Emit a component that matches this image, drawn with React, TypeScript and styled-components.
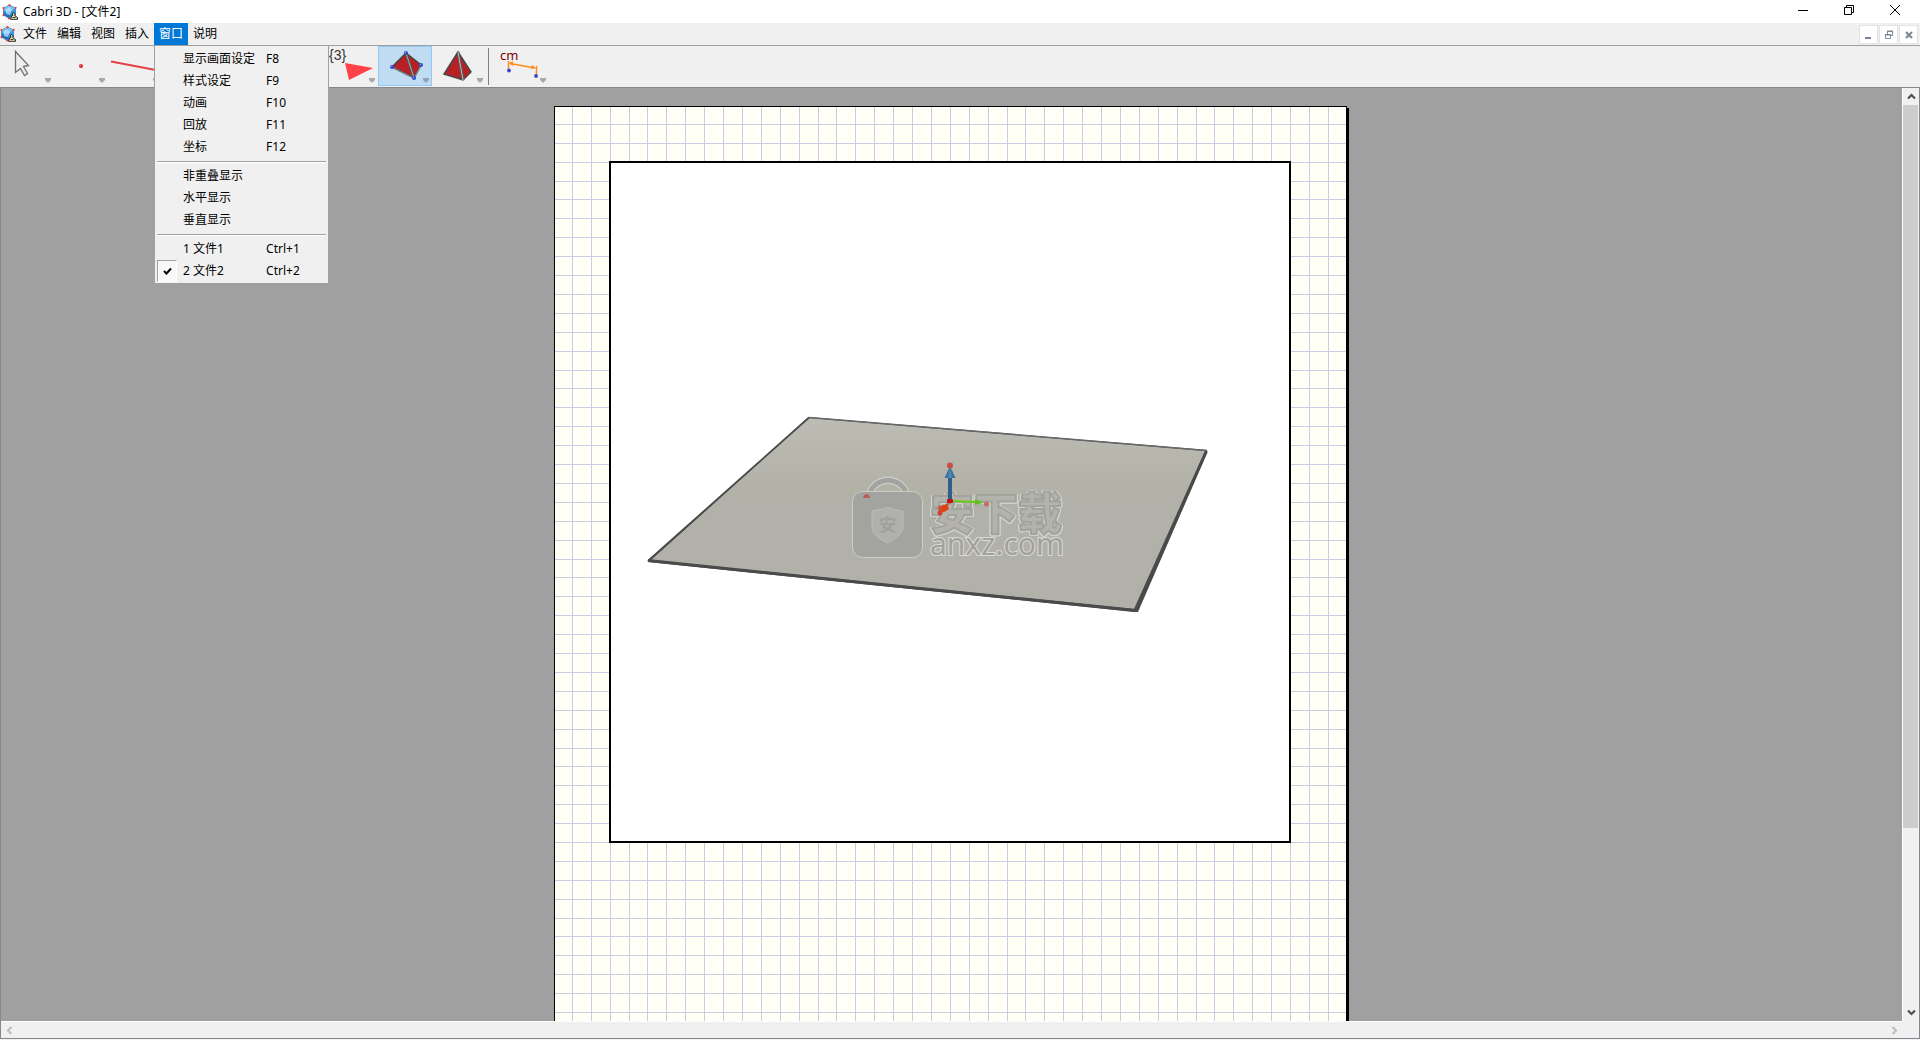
import React from "react";
import styled, { createGlobalStyle } from "styled-components";

const GlobalStyle = createGlobalStyle`
  body {
    margin: 0;
    background: #f0f0f0;
    overflow: hidden;
  }
  *, *::before, *::after { box-sizing: border-box; }
  body, button {
    font-family: "Noto Sans", "Noto Sans CJK SC", sans-serif;
    font-size: 12px;
    line-height: 16px;
    color: #000;
  }
  svg { display: block; flex: none; }
`;

const Window = styled.main`
  display: flex;
  flex-direction: column;
  height: 100vh;
  padding-bottom: 1px;
  background: #f0f0f0;
`;

const PlainButton = styled.button`
  display: flex;
  align-items: center;
  justify-content: center;
  margin: 0;
  padding: 0;
  border: 0;
  background: none;
`;

const TitleBar = styled.header`
  display: flex;
  height: 23px;
  padding-right: 2px;
  background: #fff;
`;

const Title = styled.h1`
  display: flex;
  align-items: center;
  flex: 1;
  gap: 5px;
  margin: 0;
  padding-left: 2px;
  font-size: 12px;
  font-weight: 400;
`;

const CaptionButton = styled(PlainButton)`
  width: 46px;
  height: 20px;
`;

const MenuBar = styled.nav`
  display: flex;
  height: 22px;
`;

const DocumentIcon = styled.div`
  display: flex;
  align-items: center;
  width: 18px;
`;

const MenuGroup = styled.div`
  flex: 1;
  display: flex;
`;

const MenuItem = styled.div`
  position: relative;
`;

const MenuTitle = styled(PlainButton)<{ $open?: boolean }>`
  height: 22px;
  padding: 0 5px;
  color: ${(p) => (p.$open ? "#fff" : "#000")};
  background: ${(p) => (p.$open ? "#0078d7" : "transparent")};
`;

const DropDown = styled.div`
  position: absolute;
  z-index: 2;
  top: 22px;
  left: 0;
  width: 175px;
  padding: 2px 2px 1px;
  border: 1px solid #a0a0a0;
  background: #f0f0f0;
`;

const MenuRow = styled(PlainButton)`
  display: grid;
  grid-template-columns: 19px 83px 1fr;
  width: 100%;
  height: 22px;
  text-align: left;
  white-space: nowrap;
`;

const CheckBoxMark = styled.span`
  display: flex;
  align-items: center;
  justify-content: center;
  width: 20px;
  height: 22px;
  border: 1px solid;
  border-color: #a0a0a0 #fff #fff #a0a0a0;
  background: #f8f8f8;
`;

const RowLabel = styled.span`
  grid-column: 2;
  padding-left: 7px;
`;

const RowKey = styled.span`
  grid-column: 3;
  padding-left: 7px;
`;

const MenuRule = styled.hr`
  height: 2px;
  margin: 3px 0 2px;
  border: 0;
  border-top: 1px solid #a0a0a0;
  background: #fff;
`;

const DocumentButtons = styled.div`
  display: flex;
  align-items: center;
  gap: 1px;
  padding: 2px 2px 1px 0;
`;

const DocumentButton = styled(PlainButton)`
  width: 19px;
  height: 19px;
  border: 1px solid #e3e3e3;
  background: #fff;
`;

const ToolBar = styled.div`
  display: flex;
  height: 42px;
  border-top: 1px solid #a0a0a0;
`;

const ToolButton = styled(PlainButton)<{ $active?: boolean }>`
  width: 54px;
  height: 40px;
  border: 1px solid ${(p) => (p.$active ? "#90c8f6" : "transparent")};
  background: ${(p) => (p.$active ? "#c0dcf3" : "transparent")};
`;

const ToolSeparator = styled.div`
  width: 1px;
  height: 37px;
  margin: 2px 6px 0 2px;
  background: #808080;
`;

const Workspace = styled.section`
  display: grid;
  grid-template: minmax(0, 1fr) 17px / minmax(0, 1fr) 17px;
  flex: 1;
  min-height: 0;
  border: 1px solid #828790;
`;

const Canvas = styled.div`
  display: flex;
  align-items: flex-start;
  justify-content: center;
  min-height: 0;
  padding-top: 18px;
  overflow: hidden;
  background: #a0a0a0;
`;

const Sheet = styled.article`
  position: relative;
  flex: none;
  width: 793px;
  height: 1123px;
  margin-right: 2px;
  padding: 54px;
  border: 1px solid #000;
  background: #fffff5;
  box-shadow: 2px 2px 0 #000;
`;

const GridLines = styled.svg`
  position: absolute;
  inset: 0;
`;

const View = styled.div`
  position: relative;
  width: 682px;
  height: 682px;
  border: 2px solid #000;
  background: #fff;
`;

const EmbossedText = styled.text`
  font-family: "Noto Sans CJK SC", sans-serif;
  font-size: 44px;
  font-weight: 900;
  fill: #b3b3ab;
  stroke: #a3a39e;
  stroke-width: 2px;
  stroke-linejoin: round;
  filter: drop-shadow(1px 0 0 #d8d8d3) drop-shadow(-1px 0 0 #d8d8d3) drop-shadow(0 1px 0 #d0d0ca);
`;

const VerticalScroll = styled.div`
  display: flex;
  flex-direction: column;
  border-left: 1px solid #fff;
`;

const HorizontalScroll = styled.div`
  display: flex;
  justify-content: space-between;
  border-top: 1px solid #fff;
`;

const ScrollButton = styled(PlainButton)`
  width: 16px;
  height: 17px;
`;

const ScrollThumb = styled.div`
  flex: 37;
  margin-right: 1px;
  background: #cdcdcd;
`;

const ScrollSpace = styled.div`
  flex: 9;
`;

function AppIcon() {
  return (
    <svg width="16" height="16" viewBox="0 0 16 16" aria-hidden="true">
      <path d="M7.5 1 13.5 4v7L7.5 14.5 1.5 11V4Z" fill="#2b8be0" stroke="#4b6f95" strokeWidth=".8" />
      <path d="M7.5 1 13.5 4 10 7 3 8 1.5 4Z" fill="#79c0f3" />
      <path d="M3 8 10 7 8 14.3 1.5 11Z" fill="#1872c8" />
      <path d="M4 5.5 7 3l3 3-2 5-4-1Z" fill="#bfe6ff" opacity=".75" />
      <path d="M10 7 13.5 4v7L8 14.3Z" fill="#3699e8" />
      <g fill="#e1433c">
        <circle cx="7.5" cy="1.2" r="1.1" />
        <circle cx="1.4" cy="4" r="1.1" />
        <circle cx="13.6" cy="3.8" r="1.1" />
        <circle cx="1.5" cy="11.2" r="1.1" />
        <circle cx="7" cy="14.5" r="1.1" />
      </g>
      <path d="M8.5 15.3 9.5 12l1.5-.5L10.3 9.5 12 8.5l1.2 1.5-.4 1.8 2.7 1.700v1.800Z" fill="#eee6b9" stroke="#111" strokeWidth=".9" />
      <path d="M10.5 13.5h3" stroke="#111" strokeWidth=".8" />
    </svg>
  );
}

const TOOL_ART: Record<string, React.ReactNode> = {
  pointer: (
    <path d="M15.5 5.5v21l5-4 4 7 3-2-4-7 5-1Z" fill="#eee" stroke="#707070" strokeWidth="1.3" />
  ),
  point: (
    <>
      <circle cx="27" cy="20" r="2" fill="#d22a2a" />
      <circle cx="26.5" cy="19.5" r=".7" fill="#f57d7d" />
    </>
  ),
  line: <path d="M3 15.5 53 25" stroke="#e24147" strokeWidth="2" />,
  plane: (
    <>
      <text x="5" y="14" fontSize="14" fill="#333" fontFamily="Liberation Sans, sans-serif">
        {"{3}"}
      </text>
      <path d="M21 17 49 22 25 34Z" fill="#ff4248" />
    </>
  ),
  tetrahedron: (
    <>
      <path d="M28 7 43 19 36 32 14 21Z" fill="#b92025" stroke="#454545" strokeWidth="1.5" />
      <path d="M28 7 36 32" stroke="#555" strokeWidth="3" />
      <path d="M28 7 36 32" stroke="#aaa" />
      <path d="M14 21 36 32 43 19" fill="none" stroke="#8a8a8a" strokeWidth="1" />
      {[
        [28, 7],
        [43, 19],
        [14, 21],
        [36, 32],
      ].map(([x, y]) => (
        <g key={x}>
          <circle cx={x} cy={y} r="2" fill="#3148cf" />
          <circle cx={x - 0.5} cy={y - 0.5} r=".7" fill="#8495f6" />
        </g>
      ))}
    </>
  ),
  pyramid: (
    <>
      <path d="M26 6 39 26 31 34 12 28Z" fill="#b92025" stroke="#484848" strokeWidth="1.5" />
      <path d="M26 6 31 34" stroke="#555" strokeWidth="3" />
      <path d="M26 6 31 34" stroke="#bbb" />
    </>
  ),
  distance: (
    <>
      <text x="5" y="14" fontSize="13" fill="#800000" fontFamily="Noto Sans, sans-serif">
        cm
      </text>
      <path d="M13.5 15v9M41.5 20v10" stroke="#ff8c1a" strokeWidth="1.5" />
      <path d="M15 17.5 40 22" stroke="#ff8c1a" strokeWidth="1.500" />
      <path d="M14 17l4-2v5ZM41 22l-4-3-1 4Z" fill="#ff8c1a" />
      <circle cx="14" cy="24.5" r="1.900" fill="#3148cf" />
      <circle cx="41" cy="30" r="1.900" fill="#3148cf" />
    </>
  ),
};

function Tool({ art, active }: { art?: string; active?: boolean }) {
  return (
    <ToolButton type="button" $active={active}>
      <svg width="54" height="40" viewBox="0 0 54 40" overflow="visible" aria-hidden="true">
        {art && TOOL_ART[art]}
        <path d="M45 32h6v2l-3 3-3-3Z" fill={active ? "#8fa3b4" : "#a9a9a9"} />
      </svg>
    </ToolButton>
  );
}

type Row = { label: string; hotkey?: string; checked?: boolean };

const WINDOW_MENU: Row[][] = [
  [
    { label: "显示画面设定", hotkey: "F8" },
    { label: "样式设定", hotkey: "F9" },
    { label: "动画", hotkey: "F10" },
    { label: "回放", hotkey: "F11" },
    { label: "坐标", hotkey: "F12" },
  ],
  [{ label: "非重叠显示" }, { label: "水平显示" }, { label: "垂直显示" }],
  [
    { label: "1 文件1", hotkey: "Ctrl+1" },
    { label: "2 文件2", hotkey: "Ctrl+2", checked: true },
  ],
];

const MENUS = ["文件", "编辑", "视图", "插入", "窗口", "说明"];

function WindowMenu() {
  return (
    <DropDown>
      {WINDOW_MENU.map((rows, i) => (
        <React.Fragment key={i}>
          {i > 0 && <MenuRule />}
          {rows.map((row) => (
            <MenuRow type="button" key={row.label}>
              {row.checked && (
                <CheckBoxMark>
                  <svg width="9" height="9" viewBox="0 0 9 9" aria-hidden="true">
                    <path d="M1 4 3.5 6.5 8 1.5" fill="none" stroke="#000" strokeWidth="2" />
                  </svg>
                </CheckBoxMark>
              )}
              <RowLabel>{row.label}</RowLabel>
              {row.hotkey && <RowKey>{row.hotkey}</RowKey>}
            </MenuRow>
          ))}
        </React.Fragment>
      ))}
    </DropDown>
  );
}

// Half-centimetre paper grid at 96 dpi, each line snapped to a whole pixel.
const GRID_STEP = 48 / 2.54;
const snap = (n: number) => Math.round(n * GRID_STEP - 2);

function PaperGrid() {
  const vertical = Array.from({ length: 41 }, (_, i) => snap(i + 1));
  const horizontal = Array.from({ length: 59 }, (_, i) => snap(i + 1));
  return (
    <GridLines width="100%" height="100%" aria-hidden="true" fill="#cbcbe3">
      {horizontal.map((y) => (
        <rect key={`h${y}`} x="0" y={y} width="100%" height="1" />
      ))}
      {vertical.map((x) => (
        <rect key={`v${x}`} x={x} y="0" width="1" height="100%" />
      ))}
    </GridLines>
  );
}

function Scene() {
  return (
    <svg width="678" height="678" viewBox="611 163 678 678">
      <defs>
        <linearGradient id="base" x1="0" y1="0" x2="0" y2="1">
          <stop offset="0" stopColor="#bcbcb4" />
          <stop offset=".4" stopColor="#b1b1a6" />
          <stop offset=".43" stopColor="#b1b1a9" />
          <stop offset="1" stopColor="#b1b1a9" />
        </linearGradient>
      </defs>
      <path d="M809 417 1207 450V453L1138 612H1134L648 562V560Z" fill="#4b4b4b" />
      <path d="M809 418 1205 451 1134 609 651 560Z" fill="url(#base)" />
      <path d="M809 417.5 1207 450.5" stroke="#67676a" strokeWidth="1.5" />
      <path d="M648 561 809 417.5" stroke="#4b4b4b" strokeWidth="1.8" />
      <path d="M648 560.5 1136 610.5 1206.5 451" fill="none" stroke="#4a4a4a" strokeWidth="3" />

      {/* watermark: bag with shield, then the site's name */}
      <path d="M870 493C876 476 900 476 906 493" fill="none" stroke="#d6d6d0" strokeWidth="7" />
      <path d="M870 493C876 476 900 476 906 493" fill="none" stroke="#a3a49f" strokeWidth="5" />
      <rect x="852.5" y="491.5" width="70" height="66" rx="10" fill="#a3a49f" stroke="#cecec8" />
      <path d="M872 511Q881 510 887.5 507 894 510 903 511V529Q901 537 887.5 543 874 537 872 529Z" fill="#b0b0ac" stroke="#bbbbb6" />
      <text x="879" y="531" fontSize="17" fontWeight="700" fill="#a0a09c" fontFamily="Noto Sans CJK SC, sans-serif">
        安
      </text>
      <EmbossedText x="930" y="530">
        安下载
      </EmbossedText>
      <text
        x="930"
        y="555"
        fontSize="30"
        fontFamily="Noto Sans, sans-serif"
        fill="#a1a19d"
        stroke="#dcdcd7"
        strokeWidth="2"
        paintOrder="stroke"
      >
        anxz.com
      </text>
      <path d="M863 498Q864 494 867 494 870 495 870 498Z" fill="#b95b59" />

      {/* coordinate axes */}
      <rect x="948" y="476" width="4" height="24" fill="#315e8a" />
      <path d="M950 466 955.5 478H944.5Z" fill="#3b709e" />
      <path d="M950 466 952 478H948Z" fill="#5287b6" />
      <circle cx="950" cy="465.5" r="3" fill="#cc4e42" />
      <path d="M952 501 976 502" stroke="#69cb16" strokeWidth="2" />
      <path d="M975 499 984 502.5 975 505Z" fill="#65bd25" />
      <circle cx="986.5" cy="504" r="2.5" fill="#c96b5e" />
      <path d="M950 502 943 510" stroke="#b96a58" strokeWidth="2" />
      <rect x="947" y="499" width="6" height="4" rx="1" fill="#c5101a" />
      <path d="M947 504 949 509 944 512 938 513 940 506Z" fill="#df430f" />
      <circle cx="940" cy="508" r="2.5" fill="#c85042" opacity=".7" />
      <circle cx="940" cy="513" r="2.5" fill="#cf4230" />
    </svg>
  );
}

function Chevron({ turn, color }: { turn: number; color: string }) {
  return (
    <svg width="9" height="9" viewBox="0 0 9 9" aria-hidden="true">
      <path d="M1 6.5 4.5 3 8 6.5" fill="none" stroke={color} strokeWidth="2.2" transform={`rotate(${turn} 4.5 4.5)`} />
    </svg>
  );
}

export default function App() {
  return (
    <>
      <GlobalStyle />
      <Window>
        <TitleBar>
          <Title>
            <AppIcon />
            Cabri 3D - [文件2]
          </Title>
          <CaptionButton type="button">
            <svg width="10" height="10" viewBox="0 0 10 10" shapeRendering="crispEdges">
              <path d="M0 5.5h10" stroke="#000" />
            </svg>
          </CaptionButton>
          <CaptionButton type="button">
            <svg width="10" height="10" viewBox="0 0 10 10" fill="none" stroke="#000">
              <path d="M.5 2.5h7v7h-7ZM2.5 2.5v-2h7v7h-2" />
            </svg>
          </CaptionButton>
          <CaptionButton type="button">
            <svg width="10" height="10" viewBox="0 0 10 10" stroke="#000">
              <path d="M0 0 10 10M10 0 0 10" />
            </svg>
          </CaptionButton>
        </TitleBar>

        <MenuBar>
          <DocumentIcon>
            <AppIcon />
          </DocumentIcon>
          <MenuGroup>
            {MENUS.map((name) => (
              <MenuItem key={name}>
                <MenuTitle type="button" $open={name === "窗口"}>
                  {name}
                </MenuTitle>
                {name === "窗口" && <WindowMenu />}
              </MenuItem>
            ))}
          </MenuGroup>
          <DocumentButtons>
            <DocumentButton type="button">
              <svg width="9" height="9" viewBox="0 0 9 9">
                <path d="M1 7h6v2H1Z" fill="#7a8a99" />
              </svg>
            </DocumentButton>
            <DocumentButton type="button">
              <svg width="9" height="9" viewBox="0 0 9 9" fill="none" stroke="#7a8a99">
                <path d="M3 1.5h6M3.5 2v2M8.5 2v3.500H7" />
                <path d="M3 1h6" />
                <path d="M1 4.5h5.5v4h-5v-4M1 5h6" />
              </svg>
            </DocumentButton>
            <DocumentButton type="button">
              <svg width="9" height="9" viewBox="0 0 9 9">
                <path d="M2 2 8 8M8 2 2 8" stroke="#7a8a99" strokeWidth="2.2" />
              </svg>
            </DocumentButton>
          </DocumentButtons>
        </MenuBar>

        <ToolBar>
          <Tool art="pointer" />
          <Tool art="point" />
          <Tool art="line" />
          <Tool />
          <Tool />
          <Tool />
          <Tool art="plane" />
          <Tool art="tetrahedron" active />
          <Tool art="pyramid" />
          <ToolSeparator />
          <Tool art="distance" />
        </ToolBar>

        <Workspace>
          <Canvas>
            <Sheet>
              <PaperGrid />
              <View>
                <Scene />
              </View>
            </Sheet>
          </Canvas>
          <VerticalScroll>
            <ScrollButton type="button">
              <Chevron turn={0} color="#505050" />
            </ScrollButton>
            <ScrollThumb />
            <ScrollSpace />
            <ScrollButton type="button">
              <Chevron turn={180} color="#505050" />
            </ScrollButton>
          </VerticalScroll>
          <HorizontalScroll>
            <ScrollButton type="button">
              <Chevron turn={270} color="#bfbfbf" />
            </ScrollButton>
            <ScrollButton type="button">
              <Chevron turn={90} color="#bfbfbf" />
            </ScrollButton>
          </HorizontalScroll>
        </Workspace>
      </Window>
    </>
  );
}
